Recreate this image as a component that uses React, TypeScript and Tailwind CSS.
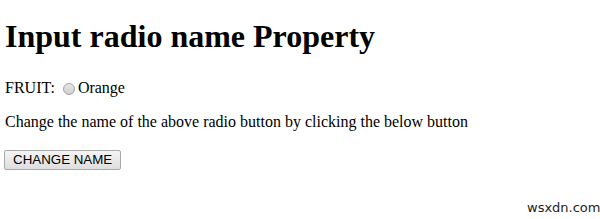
import { useState } from 'react'

export default function App() {
  const [name, setName] = useState('fruit')

  return (
    <div className="relative w-[600px] h-[219px] overflow-hidden bg-white text-black font-['Liberation_Serif','Times_New_Roman',serif]">
      <div className="pl-[5px] pt-[18px]">
        <h1 className="text-[32px] font-bold leading-[37px] mb-[23px]">Input radio name Property</h1>

        <p className="text-[16px] leading-[20px] flex items-center">
          <span>FRUIT:</span>
          <label className="flex items-center ml-[8px]" data-name={name}>
            {/* old-style grey radio */}
            <span className="inline-block w-[12px] h-[12px] rounded-full border border-[#a3a3a3] bg-gradient-to-b from-[#e6e6e6] to-[#cfcfcf] mr-[3px] mt-[1px]" />
            <span>Orange</span>
          </label>
        </p>

        <p className="text-[16px] leading-[18px] mt-[15px]">
          Change the name of the above radio button by clicking the below button
        </p>

        <div className="mt-[16px] -ml-[1px]">
          <button
            onClick={() => setName('Orange')}
            className="h-[20px] px-[8px] border border-[#a9a9a9] rounded-[2px] bg-gradient-to-b from-[#f4f4f4] to-[#dedede] text-[13.33px] leading-[18px] text-black font-['Liberation_Sans',Arial,sans-serif]"
          >
            CHANGE NAME
          </button>
        </div>
      </div>

      <div className="absolute left-[527px] top-[198px] text-[13px] text-[#222] font-['DejaVu_Sans',Verdana,sans-serif]">
        wsxdn.com
      </div>
    </div>
  )
}
